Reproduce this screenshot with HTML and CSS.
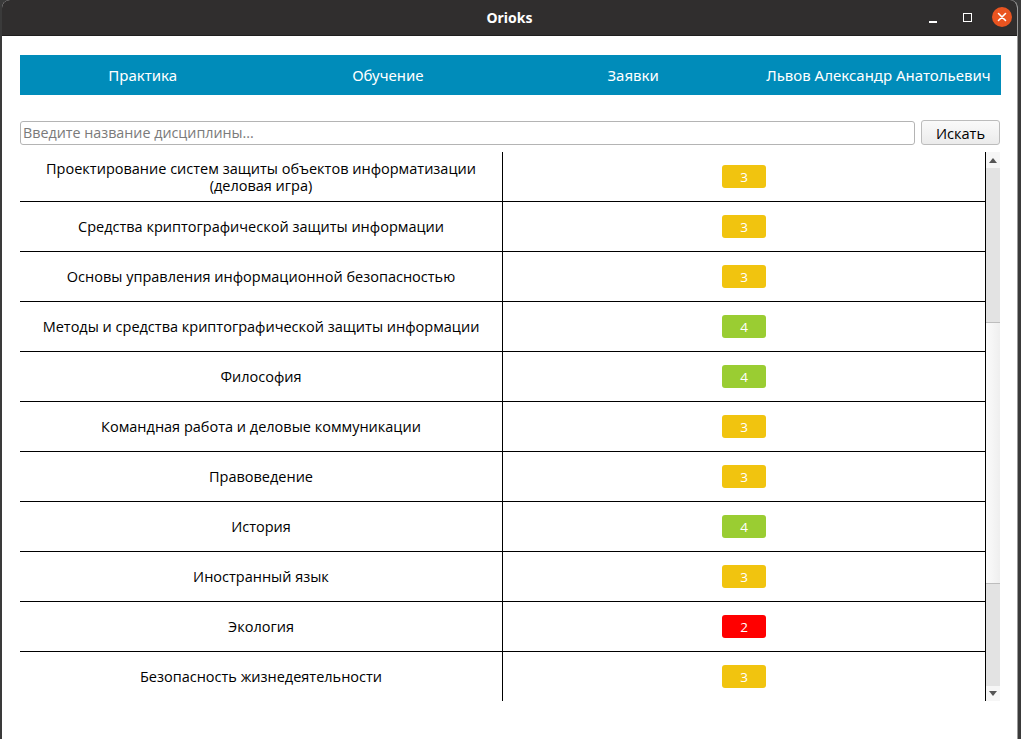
FILE: index.html
```html
<!DOCTYPE html>
<html lang="ru">
<head>
<meta charset="utf-8">
<title>Orioks</title>
<link rel="stylesheet" href="styles.css">
</head>
<body>
<div class="window">
  <header class="titlebar">
    <span class="title">Orioks</span>
    <div class="controls">
      <span class="ctl-min"></span>
      <span class="ctl-max"></span>
      <span class="ctl-close">
        <svg width="10" height="10" viewBox="0 0 10 10"><path d="M1.5 1.5 L8.5 8.5 M8.5 1.5 L1.5 8.5" stroke="#fff" stroke-width="1.6" stroke-linecap="round"/></svg>
      </span>
    </div>
  </header>
  <main class="content">
    <nav class="navbar">
      <a class="nav-item">Практика</a>
      <a class="nav-item">Обучение</a>
      <a class="nav-item">Заявки</a>
      <a class="nav-item">Львов Александр Анатольевич</a>
    </nav>
    <div class="search-row">
      <input class="search-input" type="text" placeholder="Введите название дисциплины...">
      <button class="search-btn">Искать</button>
    </div>
    <div class="table-area">
      <div class="table">
        <div class="row"><div class="cell-name">Проектирование систем защиты объектов информатизации (деловая игра)</div><div class="cell-grade"><span class="badge b3">3</span></div></div>
        <div class="row"><div class="cell-name">Средства криптографической защиты информации</div><div class="cell-grade"><span class="badge b3">3</span></div></div>
        <div class="row"><div class="cell-name">Основы управления информационной безопасностью</div><div class="cell-grade"><span class="badge b3">3</span></div></div>
        <div class="row"><div class="cell-name">Методы и средства криптографической защиты информации</div><div class="cell-grade"><span class="badge b4">4</span></div></div>
        <div class="row"><div class="cell-name">Философия</div><div class="cell-grade"><span class="badge b4">4</span></div></div>
        <div class="row"><div class="cell-name">Командная работа и деловые коммуникации</div><div class="cell-grade"><span class="badge b3">3</span></div></div>
        <div class="row"><div class="cell-name">Правоведение</div><div class="cell-grade"><span class="badge b3">3</span></div></div>
        <div class="row"><div class="cell-name">История</div><div class="cell-grade"><span class="badge b4">4</span></div></div>
        <div class="row"><div class="cell-name">Иностранный язык</div><div class="cell-grade"><span class="badge b3">3</span></div></div>
        <div class="row"><div class="cell-name">Экология</div><div class="cell-grade"><span class="badge b2">2</span></div></div>
        <div class="row"><div class="cell-name">Безопасность жизнедеятельности</div><div class="cell-grade"><span class="badge b3">3</span></div></div>
      </div>
      <div class="scrollbar">
        <div class="sb-arrow sb-up"><svg width="8" height="5" viewBox="0 0 8 5"><path d="M0 5 L4 0 L8 5 Z" fill="#555"/></svg></div>
        <div class="sb-track sb-track-top"></div>
        <div class="sb-handle"></div>
        <div class="sb-track sb-track-bottom"></div>
        <div class="sb-arrow sb-down"><svg width="8" height="5" viewBox="0 0 8 5"><path d="M0 0 L8 0 L4 5 Z" fill="#555"/></svg></div>
      </div>
    </div>
  </main>
</div>
</body>
</html>
```

FILE: styles.css
```css
* { box-sizing: border-box; }

html, body {
  margin: 0;
  padding: 0;
  width: 1021px;
  height: 739px;
  overflow: hidden;
  background: #3a3a3a;
  font-family: "Open Sans", "Noto Sans", sans-serif;
}

body {
  display: flex;
  padding-left: 2px;
}

.window {
  width: 1016px;
  height: 739px;
  background: #ffffff;
  display: flex;
  flex-direction: column;
  border-right: 1px solid #9a9a9a;
  border-radius: 8px 8px 0 0;
  overflow: hidden;
}

.titlebar {
  height: 36px;
  flex: none;
  background: #302e2e;
  border-bottom: 1px solid #1f1e1e;
  display: flex;
  align-items: center;
  justify-content: center;
  position: relative;
}

.title {
  color: #ffffff;
  font-family: "Noto Sans", "Open Sans", sans-serif;
  font-weight: 700;
  font-size: 14px;
}

.controls {
  position: absolute;
  right: 5px;
  top: 7px;
  display: flex;
  align-items: center;
  gap: 0;
}

.ctl-min {
  width: 8px;
  height: 2px;
  background: #ffffff;
  margin-right: 26px;
  margin-top: 10px;
}

.ctl-max {
  width: 9px;
  height: 9px;
  border: 1.5px solid #ffffff;
  margin-right: 20px;
  margin-top: 1px;
}

.ctl-close {
  width: 20px;
  height: 20px;
  border-radius: 50%;
  background: #e95420;
  display: flex;
  align-items: center;
  justify-content: center;
}

.content {
  flex: 1;
  padding: 19px 16px 0 18px;
  display: flex;
  flex-direction: column;
}

.navbar {
  height: 40px;
  background: #008cba;
  display: grid;
  grid-template-columns: repeat(4, 1fr);
  align-items: center;
}

.nav-item {
  color: #ffffff;
  font-size: 15px;
  text-align: center;
  font-family: "Noto Sans", sans-serif;
}

.search-row {
  margin-top: 25px;
  display: flex;
  align-items: center;
  gap: 6px;
  height: 25px;
}

.search-input {
  flex: none;
  width: 895px;
  height: 24px;
  border: 1px solid #b4b4b4;
  border-radius: 3px;
  padding: 0 2px;
  font-family: "Open Sans", sans-serif;
  font-size: 14.3px;
  color: #333;
  outline: none;
}

.search-input::placeholder {
  color: #7a7a7a;
}

.search-btn {
  width: 79px;
  height: 25px;
  border: 1px solid #bcbcbc;
  border-radius: 3px;
  background: linear-gradient(#fafafa, #ebebeb);
  font-family: "Open Sans", sans-serif;
  font-size: 14.6px;
  color: #000;
  padding: 0;
}

.table-area {
  margin-top: 7px;
  height: 549px;
  display: flex;
  overflow: hidden;
}

.table {
  width: 966px;
  flex: none;
  border-right: 1px solid #000;
  display: flex;
  flex-direction: column;
}

.row {
  height: 50px;
  flex: none;
  display: flex;
  border-bottom: 1px solid #000;
}

.cell-name {
  width: 483px;
  flex: none;
  border-right: 1px solid #000;
  display: flex;
  align-items: center;
  justify-content: center;
  text-align: center;
  padding: 0 20px;
  font-size: 14.5px;
  line-height: 17px;
  color: #000;
}

.cell-grade {
  flex: 1;
  display: flex;
  align-items: center;
  justify-content: center;
}

.badge {
  width: 44px;
  height: 23px;
  border-radius: 3px;
  color: #ffffff;
  font-size: 13.5px;
  display: flex;
  align-items: center;
  justify-content: center;
}

.b3 { background: #f1c40f; }
.b4 { background: #9acd32; }
.b2 { background: #ff0000; }

.scrollbar {
  width: 14px;
  flex: none;
  display: flex;
  flex-direction: column;
  background: #e3e3e3;
}

.sb-arrow {
  flex: none;
  height: 16px;
  background: #f6f6f6;
  display: flex;
  align-items: center;
  justify-content: center;
}

.sb-down { height: 15px; }

.sb-track-top { height: 154px; flex: none; }
.sb-track-bottom { flex: 1; }

.sb-handle {
  height: 262px;
  flex: none;
  background: linear-gradient(to right, #fbfbfb, #efefef);
  border-top: 1px solid #bdbdbd;
  border-bottom: 1px solid #bdbdbd;
}
```
